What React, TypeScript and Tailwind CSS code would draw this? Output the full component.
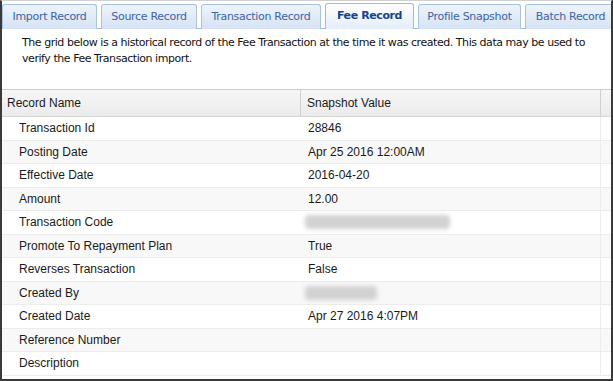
import React from 'react';

const tabs: { label: string; w: string }[] = [
  { label: 'Import Record', w: 'w-[95px]' },
  { label: 'Source Record', w: 'w-[96px]' },
  { label: 'Transaction Record', w: 'w-[120px]' },
  { label: 'Fee Record', w: 'w-[89px]' },
  { label: 'Profile Snapshot', w: 'w-[103px]' },
  { label: 'Batch Record', w: 'w-[91px]' },
];

const rows: { name: string; value?: string; blur?: number }[] = [
  { name: 'Transaction Id', value: '28846' },
  { name: 'Posting Date', value: 'Apr 25 2016 12:00AM' },
  { name: 'Effective Date', value: '2016-04-20' },
  { name: 'Amount', value: '12.00' },
  { name: 'Transaction Code', blur: 145 },
  { name: 'Promote To Repayment Plan', value: 'True' },
  { name: 'Reverses Transaction', value: 'False' },
  { name: 'Created By', blur: 72 },
  { name: 'Created Date', value: 'Apr 27 2016 4:07PM' },
  { name: 'Reference Number' },
  { name: 'Description' },
];

const App: React.FC = () => {
  return (
    <div className="w-[613px] h-[381px] bg-white border-x-2 border-b-2 border-t border-x-[#3a3a3a] border-b-[#3a3a3a] border-t-[#d0d0d0] overflow-hidden font-['Liberation_Sans',Arial,sans-serif]">
      {/* tab strip */}
      <div className="flex gap-[4px] pt-[2px] border-b border-[#99bbe8] h-[28px] font-['DejaVu_Sans',Tahoma,sans-serif] text-[11px] whitespace-nowrap">
        {tabs.map((t) => {
          const active = t.label === 'Fee Record';
          return (
            <div
              key={t.label}
              className={
                `${t.w} shrink-0 flex items-center justify-center rounded-t-[3px] border border-b-0 ` +
                (active
                  ? 'h-[26px] border-[#99bbe8] bg-gradient-to-b from-white to-[#e4edf9] text-[#15428b] font-bold tracking-[-0.4px]'
                  : 'h-[25px] mt-[1px] border-[#a9c2e2] bg-gradient-to-b from-[#eef3fb] to-[#d5e3f5] text-[#3d65a0] tracking-[-0.3px]')
              }
            >
              {t.label}
            </div>
          );
        })}
      </div>

      {/* description */}
      <div className="h-[61px] pl-[20px] pr-[8px] pt-[6px] text-[11px] leading-[16px] text-[#111] font-['DejaVu_Sans',Tahoma,sans-serif] tracking-[-0.45px] border-b border-[#b8d0ec]">
        The grid below is a historical record of the Fee Transaction at the time it was created. This data may be used to verify the Fee Transaction import.
      </div>

      {/* grid */}
      <div className="text-[12px] text-[#1a1a1a]">
        <div className="flex h-[27px] bg-gradient-to-b from-[#f7f7f7] to-[#ebebeb] border-b border-[#d6d6d6]">
          <div className="w-[299px] pl-[5px] flex items-center border-r border-[#d0d0d0]">Record Name</div>
          <div className="w-[300px] pl-[6px] flex items-center border-r border-[#d0d0d0]">Snapshot Value</div>
          <div className="flex-1" />
        </div>
        {rows.map((r, i) => (
          <div
            key={r.name}
            className={`flex h-[23.5px] border-b border-[#ececec] ${i % 2 === 1 ? 'bg-[#f8f8f8]' : 'bg-white'}`}
          >
            <div className="w-[299px] pl-[17px] flex items-center">{r.name}</div>
            <div className="w-[300px] pl-[7px] flex items-center border-r border-[#ececec]">
              {r.value}
              {r.blur && (
                <div className="h-[14px] bg-[#d2d2d2] blur-[2px] rounded-sm -ml-[3px]" style={{ width: r.blur }} />
              )}
            </div>
            <div className="flex-1" />
          </div>
        ))}
      </div>
    </div>
  );
};

export default App;
